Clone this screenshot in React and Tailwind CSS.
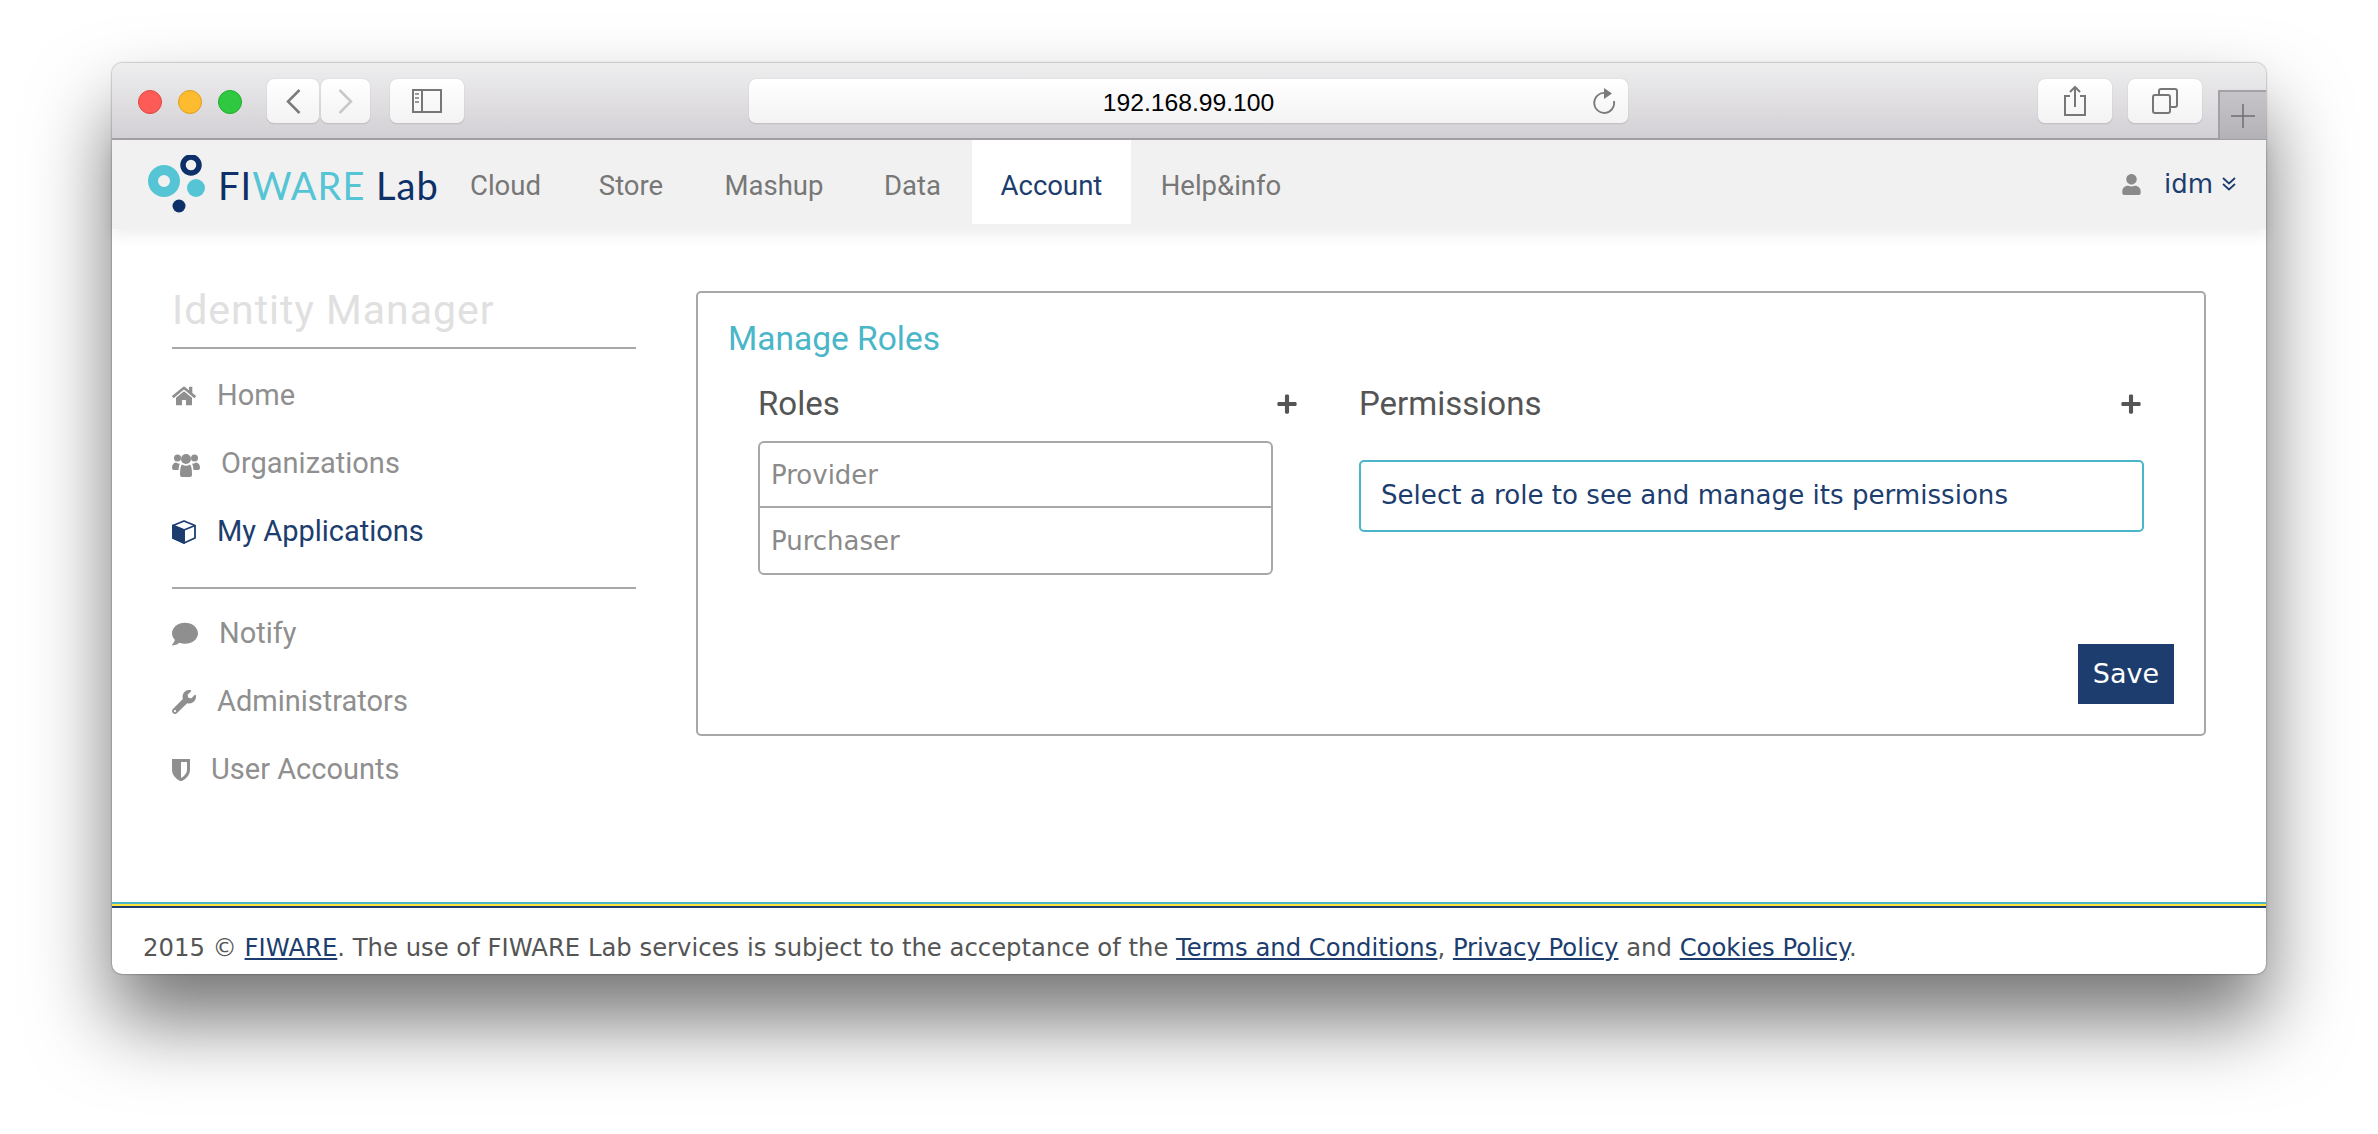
import React from 'react';
import { FaHome, FaComment, FaWrench, FaUser, FaPlus } from 'react-icons/fa';

const display = "font-['Roboto',sans-serif]";

const topLinks = [
  { label: 'Cloud', cls: 'w-[123px]' },
  { label: 'Store', cls: 'w-[128px]' },
  { label: 'Mashup', cls: 'w-[158px]' },
  { label: 'Data', cls: 'w-[119px]' },
  { label: 'Account', cls: 'w-[159px] bg-white text-[#1c3d6e]' },
  { label: 'Help&info', cls: 'w-[180px]' },
];

// font awesome 4 look, the package only has the v5 shapes for these
const UsersIcon = ({ size }) => (
  <svg width={size} height={size} viewBox="0 0 28 28" fill="currentColor">
    <circle cx="5.500" cy="8" r="3.500" />
    <circle cx="22.500" cy="8" r="3.500" />
    <circle cx="14" cy="9" r="5" />
    <path d="M0 18 Q0 13 4 12.500 Q6 14 8 13.500 Q6.500 16 6.500 20 H2 Q0 20 0 18 Z" />
    <path d="M28 18 Q28 13 24 12.500 Q22 14 20 13.500 Q21.500 16 21.500 20 H26 Q28 20 28 18 Z" />
    <path d="M8 25 Q8 16 10 14.500 Q14 17 18 14.500 Q20 16 20 25 Q20 27 18 27 H10 Q8 27 8 25 Z" />
  </svg>
);

const CubeIcon = ({ size }) => (
  <svg width={size} height={size} viewBox="0 0 24 24" fill="none" stroke="currentColor" strokeWidth="1.800" strokeLinejoin="round">
    <path d="M12 1 L23 5.500 V18 L12 23 L1 18 V5.500 Z" />
    <path d="M1 5.500 L12 10 L23 5.500 M12 10 V23" />
    <path d="M1 5.500 L12 10 V23 L1 18 Z" fill="currentColor" />
  </svg>
);

const ShieldIcon = ({ size }) => (
  <svg width={size} height={size * 1.25} viewBox="0 0 18 22.500" fill="currentColor">
    <path fillRule="evenodd" d="M0 0 H18 V11 Q18 18 9 22.500 Q0 18 0 11 Z M9 3 V19 Q15 15.500 15 11 V3 Z" />
  </svg>
);

const mainMenu = [
  { label: 'Home', icon: FaHome, size: 24 },
  { label: 'Organizations', icon: UsersIcon, size: 28 },
  { label: 'My Applications', icon: CubeIcon, size: 24, active: true },
];

const adminMenu = [
  { label: 'Notify', icon: FaComment, size: 26 },
  { label: 'Administrators', icon: FaWrench, size: 24 },
  { label: 'User Accounts', icon: ShieldIcon, size: 18 },
];

const ToolbarButton = ({ className, children }) => (
  <div className={`h-[45px] flex items-center justify-center rounded-[7px] bg-gradient-to-b from-white to-[#f3f3f3] border-b border-[#c4c2c6] shadow-[0_0_1px_rgba(0,0,0,0.3)] ${className}`}>
    {children}
  </div>
);

const MenuItem = ({ item }) => {
  const Icon = item.icon;
  return (
    <li className={`h-[68px] flex items-center gap-[21px] text-[29px] ${item.active ? 'text-[#1c3d6e]' : 'text-[#8f8f8f]'}`}>
      <Icon size={item.size} />
      <span>{item.label}</span>
    </li>
  );
};

const Logo = () => (
  <div className="flex items-center h-[60px]">
    <svg width="64" height="60" viewBox="0 0 64 60" className="shrink-0">
      <circle cx="20" cy="26" r="11" fill="none" stroke="#55c5d5" strokeWidth="10" />
      <circle cx="47" cy="6" r="8" fill="none" stroke="#0d3068" strokeWidth="5.5" transform="translate(0 4)" />
      <circle cx="52" cy="33" r="9" fill="#55c5d5" />
      <circle cx="35" cy="51" r="6.5" fill="#0d3068" />
    </svg>
    <span className="ml-[10px] text-[38px] leading-none font-['Lato',sans-serif] tracking-[1px] text-[#0d3068] whitespace-nowrap">
      FI<span className="text-[#55c5d5]">WARE</span> Lab
    </span>
  </div>
);

export default function App() {
  return (
    <div className="min-h-screen bg-white pt-[63px] pl-[112px] overflow-hidden">
      <div className="w-[2154px] h-[911px] flex flex-col rounded-[10px] bg-white shadow-[0_0_2px_rgba(0,0,0,0.55),0_46px_80px_rgba(0,0,0,0.55)]">
        {/* title bar */}
        <div className="h-[77px] shrink-0 flex items-start pt-[16px] pl-[26px] rounded-t-[10px] bg-gradient-to-b from-[#efeeef] to-[#d2d0d4] border-b-2 border-[#a3a1a5]">
          <div className="flex gap-[16px] mt-[11px]">
            <span className="w-[24px] h-[24px] rounded-full bg-[#fc5b57] border border-[#e2463f]" />
            <span className="w-[24px] h-[24px] rounded-full bg-[#fdbb2f] border border-[#e09e1a]" />
            <span className="w-[24px] h-[24px] rounded-full bg-[#2fc840] border border-[#1dad2b]" />
          </div>
          <ToolbarButton className="w-[52px] ml-[25px]">
            <svg width="15" height="25" viewBox="0 0 15 25" fill="none" stroke="#7b7b7b" strokeWidth="2.500"><path d="M13.500 1 L2 12.500 L13.500 24" /></svg>
          </ToolbarButton>
          <ToolbarButton className="w-[49px] ml-[2px]">
            <svg width="15" height="25" viewBox="0 0 15 25" fill="none" stroke="#c8c8c8" strokeWidth="2.500"><path d="M1.500 1 L13 12.500 L1.500 24" /></svg>
          </ToolbarButton>
          <ToolbarButton className="w-[74px] ml-[20px]">
            <svg width="30" height="24" viewBox="0 0 30 24" fill="none" stroke="#777" strokeWidth="2">
              <rect x="1" y="1" width="28" height="22" />
              <path d="M10 1 V23" />
              <path d="M3 5 H7 M3 9 H7 M3 13 H7" stroke="#999" />
            </svg>
          </ToolbarButton>
          <ToolbarButton className="w-[879px] ml-[285px] relative">
            <span className="text-[24.7px] pt-[3px] text-black font-['Liberation_Sans',sans-serif]">192.168.99.100</span>
            <svg className="absolute right-[12px] top-[8px]" width="24" height="28" viewBox="0 0 24 28" fill="none">
              <path d="M13 6 A10 10 0 1 0 22 14" stroke="#7b7b7b" strokeWidth="1.800" />
              <path d="M12 1 L20 6.500 L12 12 Z" fill="#7b7b7b" />
            </svg>
          </ToolbarButton>
          <ToolbarButton className="w-[74px] ml-[410px]">
            <svg width="24" height="32" viewBox="0 0 24 32" fill="none" stroke="#777" strokeWidth="2">
              <path d="M7 11 H2 V30 H22 V11 H17" />
              <path d="M12 22 V2 M7 7 L12 2 L17 7" />
            </svg>
          </ToolbarButton>
          <ToolbarButton className="w-[74px] ml-[16px]">
            <svg width="26" height="26" viewBox="0 0 26 26" fill="none" stroke="#777" strokeWidth="2">
              <rect x="1" y="7" width="17" height="18" rx="2" />
              <path d="M7 7 V3 A2 2 0 0 1 9 1 H23 A2 2 0 0 1 25 3 V17 A2 2 0 0 1 23 19 H18" />
            </svg>
          </ToolbarButton>
          <div className="w-[48px] h-[49px] ml-[16px] mt-[11px] flex items-center justify-center bg-gradient-to-b from-[#c6c4c8] to-[#b4b2b6] border-l-2 border-t-2 border-[#a3a1a5]">
            <svg width="24" height="24" viewBox="0 0 24 24" stroke="#6f6f6f" strokeWidth="1.500"><path d="M12 0 V24 M0 12 H24" /></svg>
          </div>
        </div>

        {/* site nav */}
        <div className="h-[89px] shrink-0 flex items-stretch pl-[32px] pr-[29px] bg-[#f1f1f1] shadow-[0_6px_14px_rgba(0,0,0,0.07)] relative">
          <div className="flex items-center w-[300px]"><Logo /></div>
          <nav className={`flex h-[84px] text-[27.5px] text-[#777] ${display}`}>
            {topLinks.map((l) => (
              <a key={l.label} className={`flex items-center justify-center pt-[8px] ${l.cls}`}>{l.label}</a>
            ))}
          </nav>
          <div className="ml-auto flex items-center -mt-[1px] text-[#1c3d6e]">
            <FaUser size={21} className="text-[#8a8a8a] mr-[22px]" />
            <span className="text-[26px] font-['DejaVu_Sans',sans-serif]">idm</span>
            <svg width="16" height="16" viewBox="0 0 16 16" fill="none" stroke="currentColor" strokeWidth="1.800" className="ml-[8px]">
              <path d="M2 2 L8 7.500 L14 2 M2 8 L8 13.500 L14 8" />
            </svg>
          </div>
        </div>

        {/* page */}
        <div className="flex-1 flex pl-[60px] pt-[62px]">
          <aside className={`w-[464px] shrink-0 ${display}`}>
            <h2 className="h-[58px] pb-[15px] flex items-center text-[41px] tracking-[1px] text-[#e0e0e0] -mt-[2px]">Identity Manager</h2>
            <div className="h-[2px] bg-[#a8a8a8]" />
            <ul className="pt-[13px] pb-[21px]">
              {mainMenu.map((m) => <MenuItem key={m.label} item={m} />)}
            </ul>
            <div className="h-[2px] bg-[#a8a8a8]" />
            <ul className="pt-[11px]">
              {adminMenu.map((m) => <MenuItem key={m.label} item={m} />)}
            </ul>
          </aside>

          <section className="w-[1510px] h-[445px] ml-[60px] rounded-[5px] border-2 border-[#a8a8a8] pl-[30px] pr-[30px] relative">
            <h1 className={`mt-[26px] h-[40px] flex items-center text-[33.5px] text-[#4ab6c8] ${display}`}>Manage Roles</h1>
            <div className="flex mt-[25px]">
              <div className="w-[540px] ml-[30px] shrink-0">
                <div className={`h-[40px] flex items-center justify-between text-[33px] text-[#555] ${display}`}>
                  <span>Roles</span>
                  <FaPlus size={22} className="text-[#555]" />
                </div>
                <ul className="w-[515px] mt-[17px] rounded-[6px] border-2 border-[#a8a8a8] text-[26px] text-[#8a8a8a] font-['DejaVu_Sans',sans-serif]">
                  <li className="h-[65px] flex items-center pl-[11px] pt-[1px] border-b-2 border-[#a8a8a8]">Provider</li>
                  <li className="h-[65px] flex items-center pl-[11px] pt-[1px]">Purchaser</li>
                </ul>
              </div>
              <div className="w-[785px] ml-[61px] shrink-0">
                <div className={`h-[40px] flex items-center justify-between text-[33px] text-[#555] ${display}`}>
                  <span>Permissions</span>
                  <FaPlus size={22} className="text-[#555] mr-[2px]" />
                </div>
                <div className="h-[72px] mt-[36px] flex items-center pl-[20px] rounded-[5px] border-2 border-[#4ab6c8] text-[26.1px] text-[#1c3d6e] font-['DejaVu_Sans',sans-serif]">
                  Select a role to see and manage its permissions
                </div>
              </div>
            </div>
            <button className="absolute right-[30px] bottom-[30px] w-[96px] h-[60px] bg-[#1c3d6e] text-white text-[27px] font-['DejaVu_Sans',sans-serif]">Save</button>
          </section>
        </div>

        {/* footer */}
        <div className="shrink-0 h-[72px] rounded-b-[10px] font-['DejaVu_Sans',sans-serif] text-[24.3px] text-[#555]">
          <div className="h-[2px] bg-[#4ab6c8]" />
          <div className="h-[2px] bg-[#ffe43a]" />
          <div className="h-[2px] bg-[#1c3d6e]" />
          <p className="pl-[31px] pt-[24px] leading-[32px] whitespace-nowrap">
            2015 © <a className="text-[#1c3d6e] underline">FIWARE</a>. The use of FIWARE Lab services is subject to the acceptance of the <a className="text-[#1c3d6e] underline">Terms and Conditions</a>, <a className="text-[#1c3d6e] underline">Privacy Policy</a> and <a className="text-[#1c3d6e] underline">Cookies Policy</a>.
          </p>
        </div>
      </div>
    </div>
  );
}
